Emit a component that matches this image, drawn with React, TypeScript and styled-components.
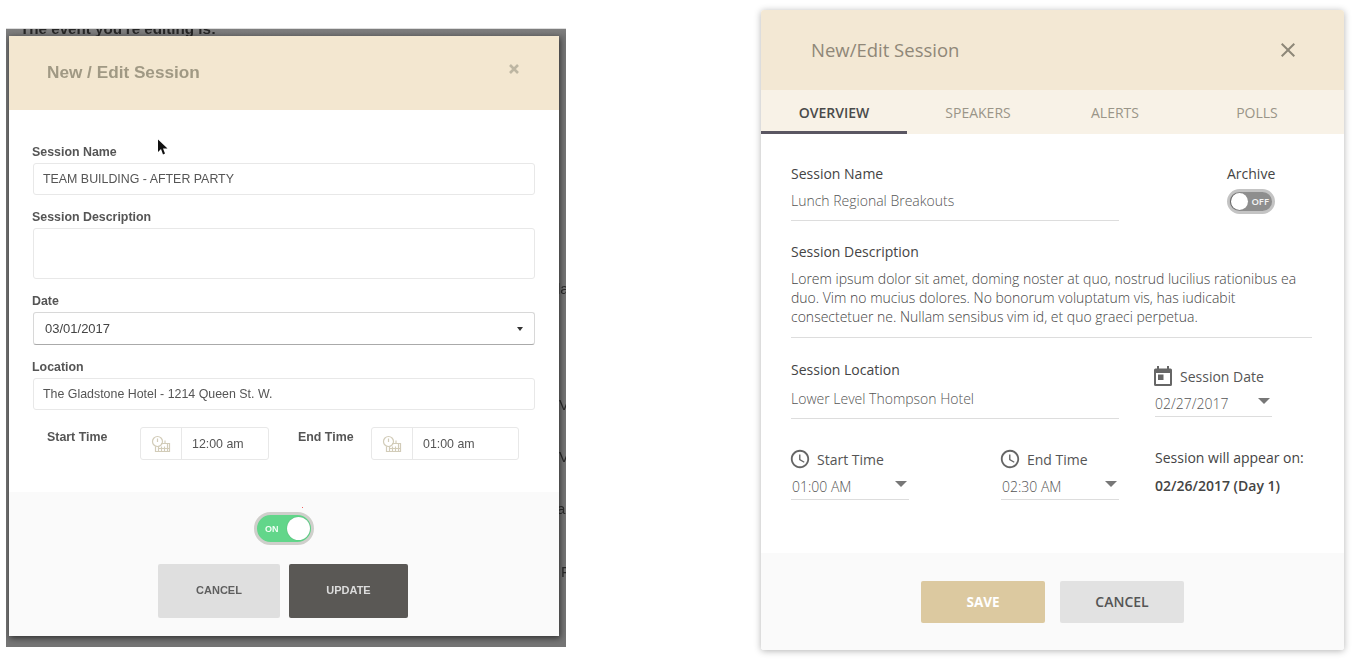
import React from "react";
import styled, { createGlobalStyle } from "styled-components";
import { MdAccessTime, MdClose } from "react-icons/md";

const GlobalStyle = createGlobalStyle`
	html, body {
		margin: 0;
		padding: 0;
		background: #fff;
	}
	* {
		box-sizing: border-box;
	}
`;

const behindBits = [
	{ text: "la", top: 252, left: 551 },
	{ text: "V", top: 368, left: 553 },
	{ text: "V", top: 420, left: 553 },
	{ text: "ar", top: 472, left: 551 },
	{ text: "F", top: 535, left: 555 },
];

const OldClockIcon = () => (
	<svg width="20" height="18" viewBox="0 0 20 18" fill="none" stroke="#d2ccb9" strokeWidth="1.2">
		<circle cx="6.5" cy="6.5" r="5" />
		<path d="M6.5 3.5v3.5" />
		<path d="M10 8.5h8.5v8h-14v-5" />
		<path d="M7.5 11.5v5M10.500 11.500v5M13.500 11.500v5M16.500 8.500v8M7.500 13.500h11" />
		<path d="M14 5.500v3" />
	</svg>
);

const Cursor = () => (
	<svg width="11" height="17" viewBox="0 0 11 17">
		<path d="M1 0.500v12.500l3-3 2 5.500 2-1-2-5h4.500z" fill="#111" />
	</svg>
);

const OldTime = ({ label, value, boxWidth }: { label: string; value: string; boxWidth: number }) => (
	<>
		<OldTimeLabel>{label}</OldTimeLabel>
		<OldTimeBox $width={boxWidth}>
			<OldTimeIcon>
				<OldClockIcon />
			</OldTimeIcon>
			<OldTimeValue>{value}</OldTimeValue>
		</OldTimeBox>
	</>
);

const OldModal = () => (
	<Frame>
		<BehindText>The event you're editing is:</BehindText>
		{behindBits.map((b) => (
			<BehindBit key={b.top} $top={b.top} $left={b.left}>
				{b.text}
			</BehindBit>
		))}
		<Modal>
			<OldHeader>
				<OldTitle>New / Edit Session</OldTitle>
				<OldClose>
					<svg width="10" height="10" viewBox="0 0 10 10" stroke="#bdb6a2" strokeWidth="2.600">
						<path d="M1 1l8 8M9 1l-8 8" />
					</svg>
				</OldClose>
			</OldHeader>
			<OldBody>
				<CursorSpot>
					<Cursor />
				</CursorSpot>
				<OldLabel>Session Name</OldLabel>
				<OldInput>TEAM BUILDING - AFTER PARTY</OldInput>
				<OldLabel>Session Description</OldLabel>
				<OldTextarea />
				<OldLabel>Date</OldLabel>
				<OldSelect>
					03/01/2017
					<OldCaret />
				</OldSelect>
				<OldLabel>Location</OldLabel>
				<OldInput>The Gladstone Hotel - 1214 Queen St. W.</OldInput>
				<OldTimeRow>
					<OldTime label="Start Time" value="12:00 am" boxWidth={129} />
					<OldTime label="End Time" value="01:00 am" boxWidth={148} />
				</OldTimeRow>
			</OldBody>
			<OldFooter>
				<OldToggle>
					<OldToggleText>ON</OldToggleText>
					<OldKnob />
					<RedSpeck />
				</OldToggle>
				<OldButtons>
					<OldCancel>CANCEL</OldCancel>
					<OldUpdate>UPDATE</OldUpdate>
				</OldButtons>
			</OldFooter>
		</Modal>
	</Frame>
);

const Arrow = () => (
	<svg width="12" height="6" viewBox="0 0 12 6">
		<path d="M0 0h12l-6 6z" fill="#777" />
	</svg>
);

const CalendarIcon = () => (
	<svg width="18" height="20" viewBox="0 0 18 20">
		<path
			fillRule="evenodd"
			fill="#666"
			d="M3 0h2v2.500h8V0h2v2.500h1.500A1.500 1.500 0 0 1 18 4v14.500a1.500 1.500 0 0 1-1.500 1.500h-15A1.500 1.500 0 0 1 0 18.500V4a1.500 1.500 0 0 1 1.500-1.500H3z M2 7v11h14V7z M4 8.500h5.500V14H4z"
		/>
	</svg>
);

const NewModal = () => (
	<Card>
		<CardHeader>
			<CardTitle>New/Edit Session</CardTitle>
			<MdClose size={24} color="#8d8778" />
		</CardHeader>
		<Tabs>
			<Tab $active>Overview</Tab>
			<Tab>Speakers</Tab>
			<Tab>Alerts</Tab>
			<Tab>Polls</Tab>
		</Tabs>
		<CardBody>
			<TopRow>
				<NameField>
					<FieldLabel>Session Name</FieldLabel>
					<FieldValue>Lunch Regional Breakouts</FieldValue>
				</NameField>
				<ArchiveField>
					<FieldLabel>Archive</FieldLabel>
					<ArchiveToggle>
						<ArchiveKnob />
						<ArchiveText>OFF</ArchiveText>
					</ArchiveToggle>
				</ArchiveField>
			</TopRow>
			<DescField>
				<FieldLabel>Session Description</FieldLabel>
				<DescText>
					Lorem ipsum dolor sit amet, doming noster at quo, nostrud lucilius rationibus ea duo. Vim no mucius
					dolores. No bonorum voluptatum vis, has iudicabit consectetuer ne. Nullam sensibus vim id, et quo
					graeci perpetua.
				</DescText>
			</DescField>
			<LocationRow>
				<LocationField>
					<FieldLabel>Session Location</FieldLabel>
					<LocationValue>Lower Level Thompson Hotel</LocationValue>
				</LocationField>
				<DateField>
					<DateLabel>
						<CalendarIcon />
						Session Date
					</DateLabel>
					<DateDropdown>
						02/27/2017
						<Arrow />
					</DateDropdown>
				</DateField>
			</LocationRow>
			<TimeRow>
				<TimeField>
					<IconLabel>
						<MdAccessTime size={22} color="#666" />
						Start Time
					</IconLabel>
					<Dropdown>
						01:00 AM
						<Arrow />
					</Dropdown>
				</TimeField>
				<TimeField>
					<IconLabel>
						<MdAccessTime size={22} color="#666" />
						End Time
					</IconLabel>
					<Dropdown>
						02:30 AM
						<Arrow />
					</Dropdown>
				</TimeField>
				<AppearField>
					<FieldLabel>Session will appear on:</FieldLabel>
					<AppearDate>02/26/2017 (Day 1)</AppearDate>
				</AppearField>
			</TimeRow>
		</CardBody>
		<CardFooter>
			<SaveButton>SAVE</SaveButton>
			<CancelButton>CANCEL</CancelButton>
		</CardFooter>
	</Card>
);

const App = () => (
	<>
		<GlobalStyle />
		<Page>
			<OldModal />
			<NewModal />
		</Page>
	</>
);

const Page = styled.div`
	display: flex;
	align-items: flex-start;
	width: 1354px;
	height: 660px;
	overflow: hidden;
	padding: 10px 0 0 6px;
`;

/* left: the old design, a blurry screenshot of a modal over a dimmed page */
const Frame = styled.div`
	position: relative;
	width: 560px;
	height: 619px;
	margin-top: 18px;
	padding: 0 7px 11px 3px;
	background: linear-gradient(#7f7f7f, #757575 8px);
	border-top: 1px solid #ddd;
	overflow: hidden;
	font-family: "Liberation Sans", Arial, sans-serif;
	filter: blur(0.5px);
`;

const BehindText = styled.div`
	height: 7px;
	padding-left: 11px;
	font-size: 15.2px;
	font-weight: 700;
	line-height: 0;
	color: #262626;
`;

const BehindBit = styled.span<{ $top: number; $left: number }>`
	position: absolute;
	top: ${(p) => p.$top}px;
	left: ${(p) => p.$left}px;
	font-size: 15px;
	line-height: 16px;
	color: #2a2a2a;
`;

const Modal = styled.div`
	position: relative;
	width: 550px;
	height: 600px;
	display: flex;
	flex-direction: column;
	box-shadow: 1px 2px 6px rgba(0, 0, 0, 0.6);
`;

const OldHeader = styled.div`
	height: 74px;
	flex: none;
	background: #f3e7d0;
	display: flex;
	justify-content: space-between;
	padding: 24px 40px 0 38px;
`;

const OldTitle = styled.div`
	font-size: 17.2px;
	font-weight: 700;
	line-height: 24px;
	color: #a09984;
`;

const OldClose = styled.div`
	line-height: 0;
	padding-top: 4px;
`;

const OldBody = styled.div`
	position: relative;
	flex: 1;
	background: #fff;
	padding: 34px 24px 0 24px;
`;

const CursorSpot = styled.div`
	position: absolute;
	left: 148px;
	top: 29px;
	line-height: 0;
`;

const OldLabel = styled.div`
	font-size: 12.4px;
	font-weight: 700;
	line-height: 15px;
	color: #555;
	margin: 0 0 3px -1px;
	&:nth-child(2) {
		margin-top: 1px;
	}
`;

const OldInput = styled.div`
	height: 32px;
	border: 1px solid #e8e8e8;
	border-radius: 3px;
	padding-left: 9px;
	font-size: 12.4px;
	line-height: 31px;
	color: #555;
	margin-bottom: 15px;
`;

const OldTextarea = styled.div`
	height: 51px;
	border: 1px solid #e8e8e8;
	border-radius: 3px;
	margin-bottom: 15px;
`;

const OldSelect = styled.div`
	height: 33px;
	display: flex;
	align-items: center;
	justify-content: space-between;
	border: 1px solid #d8d8d8;
	border-bottom-color: #aaa;
	border-radius: 3px;
	padding: 0 11px;
	font-size: 13px;
	color: #444;
	margin-bottom: 15px;
`;

const OldCaret = styled.span`
	width: 0;
	height: 0;
	border-left: 3.5px solid transparent;
	border-right: 3.5px solid transparent;
	border-top: 4px solid #333;
`;

const OldTimeRow = styled.div`
	display: flex;
	align-items: flex-start;
	padding-left: 14px;
	margin-top: 17px;
`;

const OldTimeLabel = styled.div`
	width: 93px;
	font-size: 12.4px;
	font-weight: 700;
	line-height: 20px;
	color: #555;
	& ~ & {
		width: 73px;
		margin-left: 29px;
	}
`;

const OldTimeBox = styled.div<{ $width: number }>`
	width: ${(p) => p.$width}px;
	height: 33px;
	display: flex;
	border: 1px solid #e8e8e8;
	border-radius: 3px;
`;

const OldTimeIcon = styled.div`
	width: 41px;
	display: flex;
	align-items: center;
	justify-content: center;
	border-right: 1px solid #e8e8e8;
`;

const OldTimeValue = styled.div`
	padding-left: 10px;
	font-size: 12.4px;
	line-height: 33px;
	color: #555;
`;

const OldFooter = styled.div`
	height: 144px;
	flex: none;
	background: #fafafa;
	display: flex;
	flex-direction: column;
	align-items: center;
	padding-top: 20px;
`;

const OldToggle = styled.div`
	position: relative;
	width: 60px;
	height: 33px;
	border: 3px solid #cfcfcb;
	border-radius: 17px;
	background: #62d68a;
	display: flex;
	align-items: center;
	justify-content: space-between;
	padding: 0 1px 0 8px;
`;

const OldToggleText = styled.span`
	font-size: 9px;
	font-weight: 700;
	color: #f2fff6;
`;

const OldKnob = styled.span`
	width: 23px;
	height: 23px;
	border-radius: 50%;
	background: #fff;
	box-shadow: 0 0 1px #3a9a5f;
`;

const RedSpeck = styled.span`
	position: absolute;
	top: -8px;
	left: 45px;
	width: 1px;
	height: 1px;
	background: #e66;
`;

const OldButtons = styled.div`
	display: flex;
	gap: 9px;
	margin-top: 19px;
	margin-left: -2px;
`;

const OldCancel = styled.div`
	width: 122px;
	height: 54px;
	border-radius: 2px;
	background: #dfdfdf;
	color: #5f5f5f;
	font-size: 11px;
	font-weight: 700;
	line-height: 53px;
	text-align: center;
`;

const OldUpdate = styled(OldCancel)`
	width: 119px;
	background: #5a5855;
	color: #dcdcdc;
`;

/* right: the new design */
const Card = styled.div`
	width: 583px;
	height: 640px;
	margin-left: 195px;
	display: flex;
	flex-direction: column;
	border-radius: 3px;
	overflow: hidden;
	background: #fff;
	box-shadow: 0 1px 7px rgba(0, 0, 0, 0.3);
	font-family: "Open Sans", "Noto Sans", sans-serif;
`;

const CardHeader = styled.div`
	height: 80px;
	flex: none;
	background: #f3e8d4;
	display: flex;
	align-items: center;
	justify-content: space-between;
	padding: 0 44px 0 50px;
`;

const CardTitle = styled.div`
	font-size: 18.5px;
	line-height: 24px;
	margin-bottom: 1px;
	color: #8f8778;
`;

const Tabs = styled.div`
	height: 44px;
	flex: none;
	background: #f8f2e7;
	display: grid;
	grid-template-columns: 146px 142px 132px 152px;
`;

const Tab = styled.div<{ $active?: boolean }>`
	height: 44px;
	font-size: 14px;
	line-height: 45px;
	text-align: center;
	text-transform: uppercase;
	color: ${(p) => (p.$active ? "#4a4a4a" : "#9a9588")};
	font-weight: ${(p) => (p.$active ? 600 : 400)};
	border-bottom: 3px solid ${(p) => (p.$active ? "#5a5662" : "transparent")};
`;

const CardBody = styled.div`
	flex: 1;
	padding: 30px 32px 0 30px;
`;

const TopRow = styled.div`
	display: flex;
	justify-content: space-between;
	align-items: flex-start;
`;

const NameField = styled.div`
	width: 328px;
	height: 57px;
	border-bottom: 1px solid #ddd;
`;

const LocationField = styled(NameField)`
	height: 59px;
`;

const FieldLabel = styled.div`
	font-size: 14px;
	line-height: 20px;
	color: #444;
`;

const FieldValue = styled.div`
	margin-top: 7px;
	font-size: 14px;
	font-weight: 300;
	line-height: 20px;
	color: #555;
`;

const LocationValue = styled(FieldValue)`
	margin-top: 9px;
`;

const ArchiveField = styled.div`
	width: 85px;
`;

const ArchiveToggle = styled.div`
	width: 48px;
	height: 25px;
	margin-top: 5px;
	border: 3px solid #c4c4c4;
	border-radius: 13px;
	background: #8e8e8e;
	display: flex;
	align-items: center;
	justify-content: space-between;
	padding: 0 3px 0 1px;
`;

const ArchiveKnob = styled.span`
	width: 17px;
	height: 17px;
	border-radius: 50%;
	background: #fff;
	box-shadow: -1px 0 1px rgba(0, 0, 0, 0.35);
`;

const ArchiveText = styled.span`
	font-size: 9.5px;
	font-weight: 600;
	color: #f4f4f4;
`;

const DescField = styled.div`
	height: 96px;
	margin-top: 21px;
	border-bottom: 1px solid #ddd;
`;

const DescText = styled.div`
	margin-top: 7px;
	font-size: 14px;
	font-weight: 300;
	line-height: 19px;
	color: #444;
`;

const LocationRow = styled.div`
	display: flex;
	margin-top: 22px;
`;

const DateField = styled.div`
	width: 117px;
	margin-left: 36px;
	margin-top: 4px;
`;

const IconLabel = styled.div`
	display: flex;
	align-items: center;
	gap: 6px;
	height: 24px;
	margin-left: -2px;
	font-size: 14px;
	color: #555;
	white-space: nowrap;
`;

const DateLabel = styled(IconLabel)`
	margin-left: -1px;
	gap: 8px;
`;

const Dropdown = styled.div`
	height: 29px;
	display: flex;
	align-items: flex-start;
	justify-content: space-between;
	padding: 6px 2px 0 1px;
	border-bottom: 1px solid #ddd;
	font-size: 14px;
	font-weight: 300;
	line-height: 20px;
	color: #555;
	svg {
		margin-top: 4px;
	}
`;

const DateDropdown = styled(Dropdown)`
	padding-left: 0;
`;

const TimeRow = styled.div`
	display: flex;
	margin-top: 28px;
`;

const TimeField = styled.div`
	width: 118px;
	margin-right: 92px;
	&:nth-child(2) {
		margin-right: 36px;
	}
`;

const AppearField = styled.div`
	padding-top: 1px;
`;

const AppearDate = styled.div`
	margin-top: 8px;
	font-size: 14px;
	font-weight: 600;
	line-height: 20px;
	color: #444;
`;

const CardFooter = styled.div`
	height: 97px;
	flex: none;
	background: #fafafa;
	display: flex;
	justify-content: center;
	gap: 15px;
	padding-top: 28px;
`;

const SaveButton = styled.div`
	width: 124px;
	height: 42px;
	border-radius: 2px;
	background: #dcc9a0;
	color: #fff;
	font-size: 13.5px;
	font-weight: 700;
	line-height: 42px;
	text-align: center;
`;

const CancelButton = styled(SaveButton)`
	background: #e2e2e2;
	color: #555;
	font-size: 14px;
	font-weight: 600;
`;

export default App;
